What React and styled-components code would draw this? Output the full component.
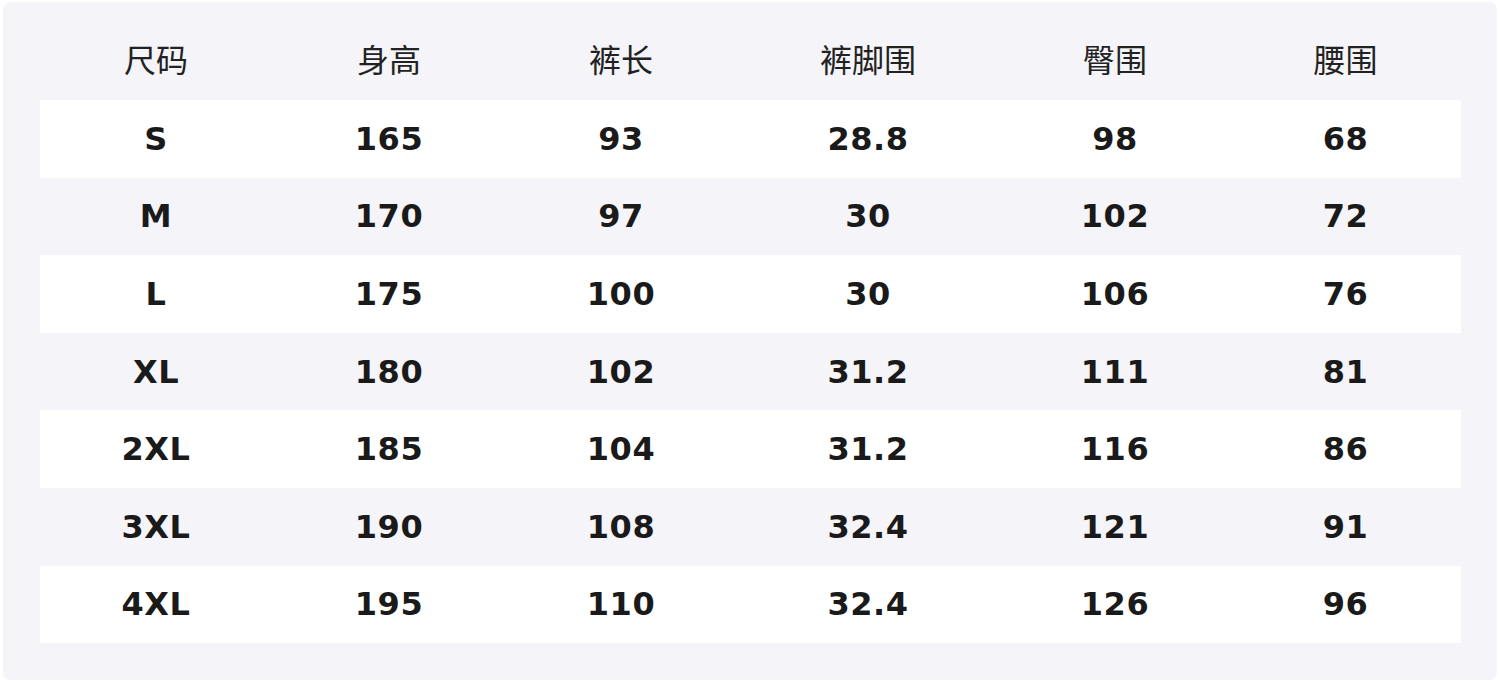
import React from "react";
import styled, { createGlobalStyle } from "styled-components";

const Global = createGlobalStyle`
  html, body { margin: 0; padding: 0; background: #ffffff; }
  body { font-family: "DejaVu Sans", "Noto Sans CJK SC", sans-serif; }
`;

const Page = styled.div`
  width: 1500px;
  height: 683px;
  padding: 2px 3px 3px 3px;
  box-sizing: border-box;
`;

const Panel = styled.div`
  height: 678px;
  background: #f4f4f9;
  border-radius: 8px;
  padding: 22px 36px 0 37px;
  box-sizing: border-box;
`;

const COLS = "232px 234px 230px 264px 230px 231px";

const HeadRow = styled.div`
  display: grid;
  grid-template-columns: ${COLS};
  height: 76px;
  padding-bottom: 8px;
  box-sizing: border-box;
  align-items: center;
`;

const HeadCell = styled.div`
  text-align: center;
  font-family: "Noto Sans CJK SC", sans-serif;
  font-size: 32px;
  font-weight: 400;
  color: #222222;
`;

const Row = styled.div`
  display: grid;
  grid-template-columns: ${COLS};
  height: 77.6px;
  align-items: center;
  background: ${(p) => (p.$white ? "#ffffff" : "transparent")};
`;

const Cell = styled.div`
  text-align: center;
  font-family: "DejaVu Sans", sans-serif;
  font-weight: 700;
  font-size: 32px;
  color: #1a1a1a;
  letter-spacing: 0.5px;
`;

const headers = ["尺码", "身高", "裤长", "裤脚围", "臀围", "腰围"];
const rows = [
  ["S", "165", "93", "28.8", "98", "68"],
  ["M", "170", "97", "30", "102", "72"],
  ["L", "175", "100", "30", "106", "76"],
  ["XL", "180", "102", "31.2", "111", "81"],
  ["2XL", "185", "104", "31.2", "116", "86"],
  ["3XL", "190", "108", "32.4", "121", "91"],
  ["4XL", "195", "110", "32.4", "126", "96"],
];

export default function App() {
  return (
    <>
      <Global />
      <Page>
        <Panel>
          <HeadRow>
            {headers.map((h) => (
              <HeadCell key={h}>{h}</HeadCell>
            ))}
          </HeadRow>
          {rows.map((r, i) => (
            <Row key={r[0]} $white={i % 2 === 0}>
              {r.map((c, j) => (
                <Cell key={j}>{c}</Cell>
              ))}
            </Row>
          ))}
        </Panel>
      </Page>
    </>
  );
}
